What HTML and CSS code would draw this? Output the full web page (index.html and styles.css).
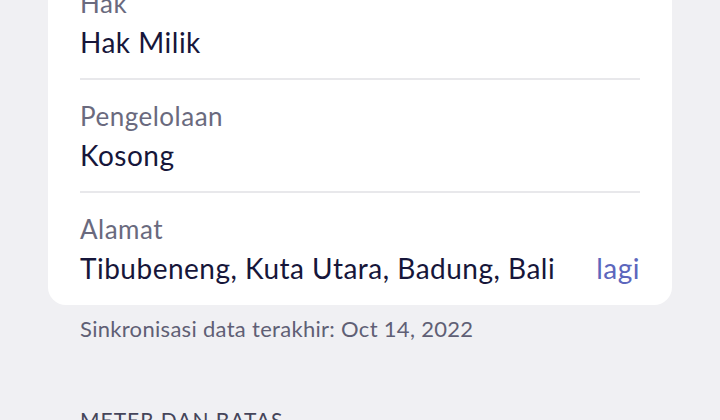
FILE: index.html
```html
<!DOCTYPE html>
<html lang="id">
<head>
    <meta charset="UTF-8">
    <meta name="viewport" content="width=device-width, initial-scale=1.0">
    <title>Detail Sertifikat</title>
    <link rel="stylesheet" href="styles.css">
</head>
<body>
    <div class="page">
        <div class="card">
            <div class="row">
                <p class="label">Hak</p>
                <p class="value">Hak Milik</p>
            </div>
            <div class="row">
                <p class="label">Pengelolaan</p>
                <p class="value">Kosong</p>
            </div>
            <div class="row">
                <p class="label">Alamat</p>
                <div class="value-line">
                    <p class="value">Tibubeneng, Kuta Utara, Badung, Bali</p>
                    <a class="more" href="#">lagi</a>
                </div>
            </div>
        </div>

        <p class="sync">Sinkronisasi data terakhir: Oct 14, 2022</p>

        <h2 class="section-title">METER DAN BATAS</h2>
    </div>
</body>
</html>
```

FILE: styles.css
```css
* {
    margin: 0;
    padding: 0;
    box-sizing: border-box;
}

body {
    font-family: Lato, 'Noto Sans', sans-serif;
    background: #f0f0f3;
    overflow: hidden;
}

/* halaman sudah tergulir sedikit ke bawah */
.page {
    margin-top: -33px;
    padding: 0 48px;
}

.card {
    background: white;
    border-radius: 0 0 18px 18px;
    padding: 0 32px;
}

.row {
    padding: 21px 0 20px;
    border-bottom: 2px solid #e8e8eb;
}

.row:last-child {
    border-bottom: none;
    padding-bottom: 21px;
}

.label {
    color: #6a6a7e;
    font-size: 26px;
    letter-spacing: 0.5px;
    line-height: 30px;
    margin-bottom: 8px;
}

.value {
    color: #16163a;
    font-size: 28px;
    letter-spacing: 0.5px;
    line-height: 32px;
}

.value-line {
    display: flex;
    justify-content: space-between;
    align-items: baseline;
}

.more {
    color: #5c67bd;
    font-size: 28px;
    letter-spacing: 0.5px;
    line-height: 32px;
    text-decoration: none;
}

.sync {
    color: #5f5f75;
    font-size: 22px;
    letter-spacing: 0.3px;
    line-height: 30px;
    margin: 9px 32px 0;
}

.section-title {
    color: #45455a;
    font-size: 21px;
    font-weight: 400;
    letter-spacing: 1px;
    margin: 63px 32px 0;
}
```
